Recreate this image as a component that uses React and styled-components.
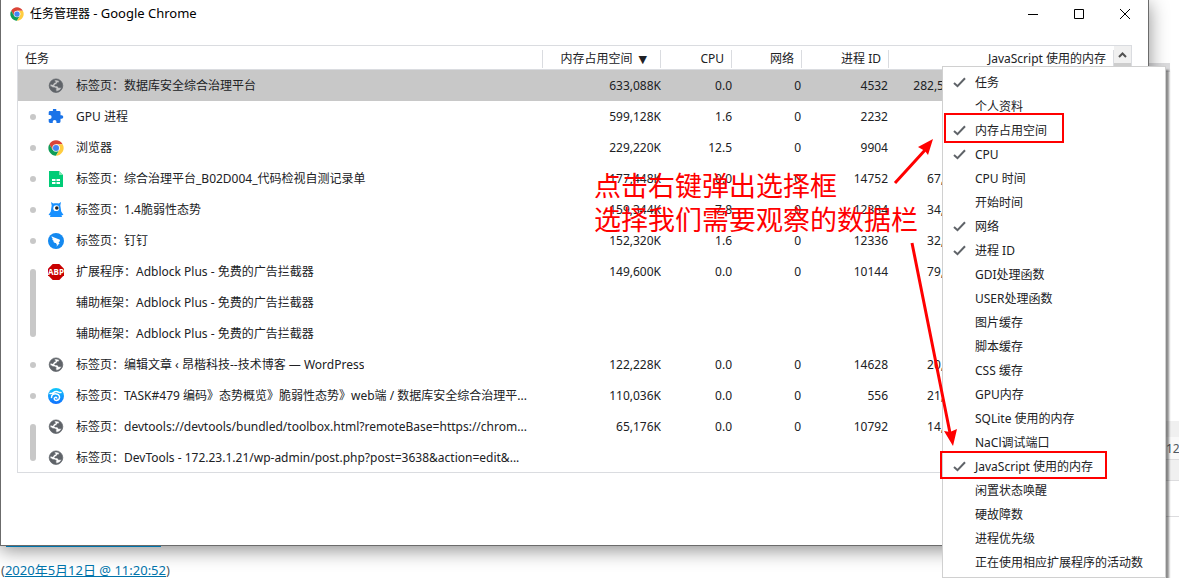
import React, { useState } from 'react';
import styled, { createGlobalStyle } from 'styled-components';

const GlobalStyle = createGlobalStyle`
  * {
    box-sizing: border-box;
  }

  body {
    margin: 0;
    background: #fff;
    color: #202124;
    font-family: "Noto Sans", "Noto Sans CJK SC", sans-serif;
    font-size: 12px;
    line-height: 16px;
    overflow: hidden;
  }
`;

const Desktop = styled.div`
  position: relative;
  min-height: 100vh;
  overflow: hidden;
`;

const Window = styled.main`
  position: relative;
  margin-right: 30px;
  padding-bottom: 72px;
  background: #fff;
  border: 1px solid #6b6b6b;
  border-top: none;
  box-shadow: 0 4px 18px rgba(0, 0, 0, 0.45);
`;

const TitleBar = styled.header`
  display: flex;
  align-items: center;
  height: 27px;
  padding-left: 9px;
  color: #000;
`;

const Title = styled.h1`
  flex: 1;
  margin: 0 0 0 6px;
  font-size: 12px;
  font-weight: 400;
`;

const Latin = styled.span`
  font-size: 13px;
`;

const WindowButton = styled.button`
  display: flex;
  align-items: center;
  justify-content: center;
  width: 46px;
  height: 27px;
  padding: 0;
  border: none;
  background: transparent;
`;

const ListFrame = styled.section`
  display: flex;
  margin: 18px 16px 0;
  border: 1px solid #dadce0;
`;

const Table = styled.table`
  flex: 1;
  width: 100%;
  margin-bottom: -1px;
  table-layout: fixed;
  border-collapse: separate;
  border-spacing: 0;
`;

const Col = styled.col`
  width: ${(p) => (p.$width ? `${p.$width}px` : 'auto')};
`;

const HeadCell = styled.th`
  height: 24px;
  padding: 2px 0 0;
  border-bottom: 1px solid #dadce0;
  font-weight: 400;
`;

const HeadLabel = styled.div`
  height: 18px;
  padding: 0 ${(p) => (p.$sorted ? 13 : 7)}px 0 7px;
  border-right: 1px solid ${(p) => (p.$last ? 'transparent' : '#dadce0')};
  line-height: 18px;
  text-align: ${(p) => p.$align || 'right'};
  white-space: nowrap;
`;

const SortArrow = styled.span`
  margin-left: 6px;
  font-family: "DejaVu Sans", sans-serif;
  font-size: 11px;
  line-height: 12px;
`;

const Row = styled.tr`
  height: 31px;
  background: ${(p) => (p.$selected ? '#c8c8c8' : 'transparent')};
`;

const GroupCell = styled.td`
  padding: 0 0 0 12px;
`;

const GroupMark = styled.div`
  width: 6px;
  height: ${(p) => p.$rows * 31 - 25}px;
  border-radius: 3px;
  background: #c8c8c8;
`;

const NameCell = styled.td`
  padding: 0;
`;

const Name = styled.div`
  display: flex;
  align-items: center;
  gap: 12px;
`;

const IconBox = styled.span`
  display: flex;
  flex: none;
  width: 16px;
  height: 16px;
`;

const NameText = styled.span`
  overflow: hidden;
  text-overflow: ellipsis;
  white-space: nowrap;
`;

const NumberCell = styled.td`
  padding: 0 ${(p) => p.$inset || 0}px 0 0;
  text-align: right;
  white-space: nowrap;
`;

const Scrollbar = styled.div`
  flex: none;
  width: 17px;
  background: #f0f0f0;
`;

const ScrollUp = styled.button`
  display: flex;
  align-items: center;
  justify-content: center;
  width: 17px;
  height: 17px;
  padding: 0;
  border: none;
  background: transparent;
`;

const ScrollThumb = styled.div`
  height: 240px;
  background: #cdcdcd;
`;

const Menu = styled.ul`
  position: absolute;
  z-index: 2;
  top: 66px;
  right: 13px;
  width: 224px;
  margin: 0;
  padding: 4px 0 2px;
  list-style: none;
  background: #fff;
  border: 1px solid #d0d0d0;
  box-shadow: 3px 4px 2px rgba(0, 0, 0, 0.45);
`;

const MenuItem = styled.button`
  display: flex;
  align-items: center;
  width: 100%;
  height: 24px;
  padding: 0;
  border: none;
  background: transparent;
  color: #202124;
  font: inherit;
  text-align: left;
  white-space: nowrap;
`;

const CheckBox = styled.span`
  display: flex;
  width: 32px;
  padding: 0 0 2px 10px;
`;

const Marker = styled.div`
  position: absolute;
  z-index: 3;
  top: ${(p) => p.$top}px;
  right: ${(p) => p.$right}px;
  width: ${(p) => p.$width}px;
  height: ${(p) => p.$height}px;
  border: 2px solid #f00;
  pointer-events: none;
`;

const Note = styled.p`
  position: absolute;
  z-index: 1;
  top: 169px;
  right: 261px;
  margin: 0;
  color: #f00;
  font-size: 27px;
  line-height: 34px;
  pointer-events: none;
`;

const Arrows = styled.svg`
  position: absolute;
  z-index: 3;
  top: 130px;
  right: 209px;
  pointer-events: none;
`;

const Backdrop = styled.div`
  position: absolute;
  top: 0;
  right: 0;
  bottom: 0;
  width: 31px;
`;

const Panel = styled.div`
  position: absolute;
  top: ${(p) => p.$top}px;
  left: 0;
  right: ${(p) => p.$right || 0}px;
  height: ${(p) => p.$height}px;
  padding-left: 18px;
  background: ${(p) => p.$color};
  color: #50575e;
  line-height: 24px;
  border-bottom: 1px solid #dcdcde;
`;

const Stamp = styled.footer`
  position: relative;
  padding-left: 1px;
  color: #50575e;
  font-size: 13px;
  line-height: 16px;

  a {
    color: #0073aa;
    text-decoration: underline;
  }
`;

const HiddenLinkLine = styled.div`
  width: 155px;
  height: 1px;
  margin: 0 0 15px 5px;
  background: #0073aa;
`;

const ChromeIcon = ({ size = 16 }) => (
  <svg width={size} height={size} viewBox="0 0 48 48">
    <path d="M4.1 12.5A23 23 0 0 1 43.9 12.5H24L14 29.8z" fill="#db4437" />
    <path d="M4.1 12.5A23 23 0 0 0 24 47l10-17.2H14z" fill="#0f9d58" />
    <path d="M43.9 12.5A23 23 0 0 1 24 47l10-17.2a11.5 11.5 0 0 0-10-17.3z" fill="#ffcd40" />
    <circle cx="24" cy="24" r="11" fill="#f1f1f1" />
    <circle cx="24" cy="24" r="9" fill="#4285f4" />
  </svg>
);

const GlobeIcon = () => (
  <svg width="16" height="16" viewBox="0 0 16 16">
    <path
      fillRule="evenodd"
      d="M8 .9a6.800 6.800 0 1 0 0 13.600A6.800 6.800 0 0 0 8 .9zM6.300 2.300C8 1.700 9.800 1.900 11.300 2.800L10.800 4.700H9.300L8.600 6.300 6.700 7 7 7.900h2.500l1 1.700h3.100C12.900 11.700 11 13.200 8.600 13.400L7.700 12l.5-1.500-1.700-.8H5L2 7.900C2 7.300 2.200 6.600 2.400 6L5 6.600 5.600 5l1.800-.7z"
      fill="#5f6368"
      stroke="#5f6368"
      strokeWidth=".7"
    />
  </svg>
);

const PuzzleIcon = () => (
  <svg width="16" height="16" viewBox="1 2 23 23">
    <path
      d="M20.5 11H19V7a2 2 0 0 0-2-2h-4V3.500a2.500 2.500 0 0 0-5 0V5H4a2 2 0 0 0-2 2v3.800h1.500a2.700 2.700 0 0 1 0 5.400H2V20a2 2 0 0 0 2 2h3.800v-1.500a2.700 2.700 0 0 1 5.400 0V22H17a2 2 0 0 0 2-2v-4h1.500a2.500 2.500 0 0 0 0-5z"
      fill="#1a73e8"
    />
  </svg>
);

const SheetIcon = () => (
  <svg width="16" height="16" viewBox="0 0 16 16">
    <path d="M1 0h10l4 4v12H1z" fill="#0c7" />
    <path d="M11 0l4 4h-4z" fill="#7fe8b4" />
    <path d="M4 8h3.500v2H4zM8.500 8H12v2H8.500zM4 11h3.500v2H4zM8.500 11H12v2H8.500z" fill="#fff" />
  </svg>
);

const MonsterIcon = () => (
  <svg width="16" height="16" viewBox="0 0 16 16">
    <path
      d="M3 0l2.300 1.600C7 1 9 1 10.700 1.600L13 0l-.7 3.500c.5 2 .5 4 .9 6L15.500 13l-2 .2.5 1.800H2l.5-1.800-2-.2 2.300-3.500c.4-2 .4-4 .9-6z"
      fill="#1890ff"
    />
    <circle cx="8.200" cy="6.200" r="2.900" fill="#fff" />
    <circle cx="8.800" cy="6" r="1.800" fill="#222" />
  </svg>
);

const DingIcon = () => (
  <svg width="16" height="16" viewBox="0 0 16 16">
    <circle cx="8" cy="8" r="8" fill="#1489f0" />
    <path d="M3.500 3.300c3 1.500 5.200 2 7.900 3.200.7.400.7 1 .3 1.800L10.500 10h1.200L8.500 13.700l.7-2.400H8L8.300 10C6.500 10 5.500 9.200 5.200 8.200l1.200.1C5 7.600 4.100 6.700 4.100 5.600l1.200.3C4.200 5.200 3.500 4.500 3.500 3.300z" fill="#fff" />
  </svg>
);

const AbpIcon = () => (
  <svg width="16" height="16" viewBox="0 0 16 16">
    <path d="M4.700 0h6.600L16 4.700v6.600L11.300 16H4.700L0 11.300V4.700z" fill="#c80000" />
    <text x="8" y="11" textAnchor="middle" fontFamily="Open Sans, sans-serif" fontSize="8" fontWeight="700" fill="#fff">
      ABP
    </text>
  </svg>
);

const SwirlIcon = () => (
  <svg width="16" height="16" viewBox="0 0 16 16">
    <defs>
      <linearGradient id="swirl" x1="0" y1="0" x2="0" y2="1">
        <stop offset="0" stopColor="#12c8fa" />
        <stop offset="1" stopColor="#1070ff" />
      </linearGradient>
    </defs>
    <circle cx="8" cy="8" r="8" fill="url(#swirl)" />
    <path
      d="M2 5.500c3 .8 3.500-2.300 6.500-2 2 .2 2.500 1.500 4.500 1M3.500 9.500C3.500 6.500 6 5.500 8.500 6c3 .6 3.700 3 2.500 5-1.300 2-4.500 1.800-4.800 0-.2-1.600 2-2.200 2.600-1"
      fill="none"
      stroke="#fff"
      strokeWidth="1.500"
      strokeLinecap="round"
    />
  </svg>
);

const CheckIcon = () => (
  <svg width="13" height="11" viewBox="0 0 13 11">
    <path d="M1 6l3.500 3.200L12 1.200" fill="none" stroke="#5f6368" strokeWidth="2" />
  </svg>
);

const groups = [
  [{ icon: GlobeIcon, name: '标签页：数据库安全综合治理平台', mem: '633,088K', cpu: '0.0', net: '0', pid: '4532', js: '282,5' }],
  [{ icon: PuzzleIcon, name: 'GPU 进程', mem: '599,128K', cpu: '1.6', net: '0', pid: '2232' }],
  [{ icon: ChromeIcon, name: '浏览器', mem: '229,220K', cpu: '12.5', net: '0', pid: '9904' }],
  [{ icon: SheetIcon, name: '标签页：综合治理平台_B02D004_代码检视自测记录单', mem: '177,448K', cpu: '0.0', net: '0', pid: '14752', js: '67,' }],
  [{ icon: MonsterIcon, name: '标签页：1.4脆弱性态势', mem: '159,344K', cpu: '7.8', net: '0', pid: '12384', js: '34,' }],
  [{ icon: DingIcon, name: '标签页：钉钉', mem: '152,320K', cpu: '1.6', net: '0', pid: '12336', js: '32,' }],
  [
    { icon: AbpIcon, name: '扩展程序：Adblock Plus - 免费的广告拦截器', mem: '149,600K', cpu: '0.0', net: '0', pid: '10144', js: '79,' },
    { name: '辅助框架：Adblock Plus - 免费的广告拦截器' },
    { name: '辅助框架：Adblock Plus - 免费的广告拦截器' },
  ],
  [{ icon: GlobeIcon, name: '标签页：编辑文章 ‹ 昂楷科技--技术博客 — WordPress', mem: '122,228K', cpu: '0.0', net: '0', pid: '14628', js: '20,' }],
  [{ icon: SwirlIcon, name: '标签页：TASK#479 编码》态势概览》脆弱性态势》web端 / 数据库安全综合治理平...', mem: '110,036K', cpu: '0.0', net: '0', pid: '556', js: '21,' }],
  [
    { icon: GlobeIcon, name: '标签页：devtools://devtools/bundled/toolbox.html?remoteBase=https://chrom...', mem: '65,176K', cpu: '0.0', net: '0', pid: '10792', js: '14,' },
    { icon: GlobeIcon, name: '标签页：DevTools - 172.23.1.21/wp-admin/post.php?post=3638&action=edit&...' },
  ],
];

const columns = [
  '任务',
  '个人资料',
  '内存占用空间',
  'CPU',
  'CPU 时间',
  '开始时间',
  '网络',
  '进程 ID',
  'GDI处理函数',
  'USER处理函数',
  '图片缓存',
  '脚本缓存',
  'CSS 缓存',
  'GPU内存',
  'SQLite 使用的内存',
  'NaCl调试端口',
  'JavaScript 使用的内存',
  '闲置状态唤醒',
  '硬故障数',
  '进程优先级',
  '正在使用相应扩展程序的活动数',
];

function TaskTable() {
  const [selected, setSelected] = useState(0);

  return (
    <Table>
      <colgroup>
        <Col $width={30} />
        <Col />
        <Col $width={118} />
        <Col $width={71} />
        <Col $width={70} />
        <Col $width={87} />
        <Col $width={225} />
      </colgroup>
      <thead>
        <tr>
          <HeadCell colSpan={2}><HeadLabel $align="left">任务</HeadLabel></HeadCell>
          <HeadCell><HeadLabel $sorted>内存占用空间<SortArrow>▼</SortArrow></HeadLabel></HeadCell>
          <HeadCell><HeadLabel>CPU</HeadLabel></HeadCell>
          <HeadCell><HeadLabel>网络</HeadLabel></HeadCell>
          <HeadCell><HeadLabel>进程 ID</HeadLabel></HeadCell>
          <HeadCell><HeadLabel>JavaScript 使用的内存</HeadLabel></HeadCell>
        </tr>
      </thead>
      <tbody>
        {groups.map((group, g) =>
          group.map((task, i) => (
            <Row key={`${g}-${i}`} $selected={selected === g} onClick={() => setSelected(g)}>
              {i === 0 && (
                <GroupCell rowSpan={group.length}>
                  <GroupMark $rows={group.length} />
                </GroupCell>
              )}
              <NameCell>
                <Name>
                  <IconBox>{task.icon && <task.icon />}</IconBox>
                  <NameText>{task.name}</NameText>
                </Name>
              </NameCell>
              <NumberCell>{task.mem}</NumberCell>
              <NumberCell>{task.cpu}</NumberCell>
              <NumberCell $inset={1}>{task.net}</NumberCell>
              <NumberCell $inset={1}>{task.pid}</NumberCell>
              <NumberCell $inset={170}>{task.js}</NumberCell>
            </Row>
          ))
        )}
      </tbody>
    </Table>
  );
}

function ColumnMenu() {
  const [checked, setChecked] = useState(['任务', '内存占用空间', 'CPU', '网络', '进程 ID', 'JavaScript 使用的内存']);

  const toggle = (name) =>
    setChecked((list) => (list.includes(name) ? list.filter((c) => c !== name) : [...list, name]));

  return (
    <Menu role="menu">
      {columns.map((name) => (
        <li key={name} role="none">
          <MenuItem role="menuitemcheckbox" aria-checked={checked.includes(name)} onClick={() => toggle(name)}>
            <CheckBox>{checked.includes(name) && <CheckIcon />}</CheckBox>
            {name}
          </MenuItem>
        </li>
      ))}
    </Menu>
  );
}

export default function App() {
  return (
    <Desktop>
      <GlobalStyle />
      <Backdrop>
        <Panel $top={63} $height={9} $right={9} $color="#dcdcde" />
        <Panel $top={421} $height={17} $color="#f0f0f0" />
        <Panel $top={437} $height={23} $color="#f9f9f9">12</Panel>
        <Panel $top={460} $height={21} $color="#f0f0f0" />
        <Panel $top={481} $height={36} $color="#fff" />
      </Backdrop>
      <Window>
        <TitleBar>
          <ChromeIcon size={14} />
          <Title>任务管理器 <Latin>- Google Chrome</Latin></Title>
          <WindowButton aria-label="最小化">
            <svg width="10" height="10"><path d="M0 5.500h10" stroke="#000" /></svg>
          </WindowButton>
          <WindowButton aria-label="最大化">
            <svg width="10" height="10"><path d="M.5.5h9v9h-9z" fill="none" stroke="#000" /></svg>
          </WindowButton>
          <WindowButton aria-label="关闭">
            <svg width="10" height="10"><path d="M0 0l10 10M10 0L0 10" stroke="#000" /></svg>
          </WindowButton>
        </TitleBar>
        <ListFrame>
          <TaskTable />
          <Scrollbar>
            <ScrollUp aria-label="向上滚动">
              <svg width="9" height="6"><path d="M1 5l3.500-3.500L8 5" fill="none" stroke="#505050" strokeWidth="2" /></svg>
            </ScrollUp>
            <ScrollThumb />
          </Scrollbar>
        </ListFrame>
      </Window>
      <Stamp>
        <HiddenLinkLine />
        (<a href="#revision">2020年5月12日 @ 11:20:52</a>)
      </Stamp>
      <Note>
        点击右键弹出选择框
        <br />
        选择我们需要观察的数据栏
      </Note>
      <ColumnMenu />
      <Marker $top={113} $right={115} $width={120} $height={30} />
      <Marker $top={451} $right={72} $width={167} $height={28} />
      <Arrows width="80" height="320" viewBox="890 130 80 320">
        <path d="M895 183L926 149M912 243L950 433" stroke="#f00" strokeWidth="3" />
        <path d="M933 139l-5 16-3-4-7-4zM953 446l-9-15 6 1 7-3z" fill="#f00" />
      </Arrows>
    </Desktop>
  );
}
